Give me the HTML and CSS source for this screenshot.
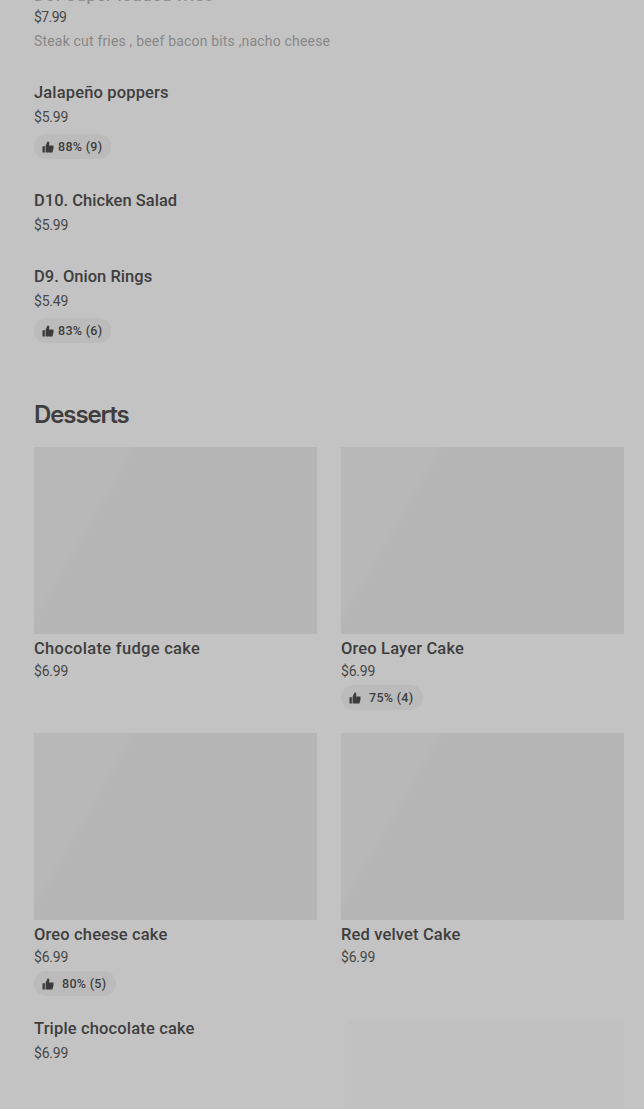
FILE: index.html
```html
<!DOCTYPE html>
<html lang="en">
<head>
<meta charset="utf-8">
<title>Menu</title>
<link rel="stylesheet" href="styles.css">
</head>
<body>
<svg class="defs" width="0" height="0"><symbol id="thumb" viewBox="0 0 12 12"><path d="M0.5 5.2H2.8V11.5H0.5ZM3.6 4.8L5.5 0.5H6.4Q7.5 1 7.4 2.2L7 4.4H11.5V7.5L10.4 11.5H3.6Z"/></symbol></svg>
<main class="menu">
<ul class="list">
<li class="item-first"><h3 class="name">D8. Super loaded fries</h3><p class="price price-tight">$7.99</p><p class="desc">Steak cut fries , beef bacon bits ,nacho cheese</p></li>
<li class="item-rated"><h3 class="name">Jalapeño poppers</h3><p class="price">$5.99</p><div class="rating"><svg class="thumb"><use href="#thumb"/></svg><span>88% (9)</span></div></li>
<li class="item-plain"><h3 class="name name-tight">D10. Chicken Salad</h3><p class="price">$5.99</p></li>
<li class="item-rated"><h3 class="name name-tight">D9. Onion Rings</h3><p class="price">$5.49</p><div class="rating"><svg class="thumb"><use href="#thumb"/></svg><span>83% (6)</span></div></li>
</ul>
<h2 class="heading">Desserts</h2>
<section class="grid">
<article class="card"><div class="photo"></div><h3 class="name name-wide">Chocolate fudge cake</h3><p class="price">$6.99</p></article>
<article class="card"><div class="photo"></div><h3 class="name">Oreo Layer Cake</h3><p class="price">$6.99</p><div class="rating rating-wide"><svg class="thumb"><use href="#thumb"/></svg><span>75% (4)</span></div></article>
<article class="card"><div class="photo"></div><h3 class="name">Oreo cheese cake</h3><p class="price">$6.99</p><div class="rating rating-wide"><svg class="thumb"><use href="#thumb"/></svg><span>80% (5)</span></div></article>
<article class="card"><div class="photo"></div><h3 class="name">Red velvet Cake</h3><p class="price">$6.99</p></article>
<article class="card-text"><h3 class="name">Triple chocolate cake</h3><p class="price">$6.99</p></article>
<div class="ghost"></div>
</section>
</main>
</body>
</html>
```
FILE: styles.css
```css
* { box-sizing: border-box; margin: 0; padding: 0; }
body { height: 1109px; overflow: hidden; background: #c3c3c3; color: #3e3e3e; font-family: Roboto, "Liberation Sans", sans-serif; }
.defs { display: block; }
.menu { display: flex; flex-direction: column; width: 590px; margin-left: 34px; height: 1109px; }
.list { list-style: none; height: 398px; flex: none; display: flex; flex-direction: column; }
.item-first { height: 80px; display: flow-root; }
.item-first .name { margin-top: -17px; height: 22px; color: #8c8c8c; letter-spacing: .75px; }
.item-rated { height: 108px; }
.item-plain { height: 76px; }
.name { height: 25px; line-height: 25px; font-size: 16.5px; font-weight: 500; letter-spacing: .15px; white-space: nowrap; }
.name-tight { letter-spacing: .02px; }
.name-wide { letter-spacing: .3px; }
.price { height: 24px; line-height: 24px; font-size: 14px; letter-spacing: -.2px; color: #474747; }
.price-tight { letter-spacing: -.6px; }
.desc { height: 24px; line-height: 24px; font-size: 14px; letter-spacing: .18px; color: #888; white-space: nowrap; }
.rating { display: flex; align-items: center; width: 77px; height: 25px; margin-top: 5px; padding-left: 8px; border-radius: 13px; background: #bbb; font-size: 12.5px; font-weight: 500; letter-spacing: .3px; gap: 4px; line-height: 25px; white-space: nowrap; }
.thumb { flex: none; width: 12px; height: 12px; fill: #3b3b3b; }
.heading { height: 49px; flex: none; line-height: 34px; font-family: Inter, Roboto, sans-serif; font-size: 24px; font-weight: 600; letter-spacing: -1.1px; }
.grid { display: grid; grid-template-columns: 283px 283px; grid-template-rows: 286px 286px 90px; column-gap: 24px; }
.photo { height: 187px; background: linear-gradient(120deg, #b8b8b8 0%, #b8b8b8 24%, #b5b5b5 28%, #b5b5b5 100%); }
.card .name { margin-top: 2px; height: 24px; }
.card .price { height: 22px; line-height: 22px; }
.card .rating { margin-top: 3px; }
.rating-wide { width: 82px; gap: 8px; }
.card-text .name { margin-top: -3px; }
.ghost { margin: 1px 0 0 7px; height: 89px; background: #c1c1c1; }
```
